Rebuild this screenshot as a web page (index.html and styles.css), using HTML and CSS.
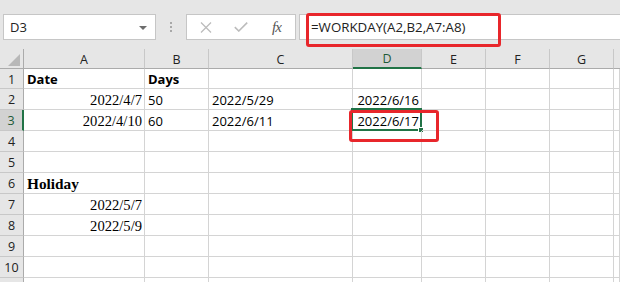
FILE: index.html
```html
<!DOCTYPE html>
<html>
<head>
<meta charset="utf-8">
<link rel="stylesheet" href="styles.css">
</head>
<body>
<div class="app">
  <div class="toolbar">
    <div class="namebox">
      <span class="name">D3</span>
      <svg class="dd" width="8" height="4" viewBox="0 0 8 4"><path d="M0 0H8L4 4Z" fill="#6d6d6d"/></svg>
    </div>
    <div class="grip"><i></i><i></i><i></i></div>
    <div class="fxbtns">
      <svg class="ico" width="12" height="11" viewBox="0 0 12 11"><path d="M1 0.5L11 10.5M11 0.5L1 10.5" stroke="#bcbcbc" stroke-width="1.3" fill="none"/></svg>
      <svg class="ico" width="14" height="10" viewBox="0 0 14 10"><path d="M0.8 5.2L4.8 9L13.2 0.6" stroke="#bcbcbc" stroke-width="1.6" fill="none"/></svg>
      <span class="fx">fx</span>
    </div>
    <div class="formula"><span>=WORKDAY(A2,B2,A7:A8)</span></div>
  </div>
  <div class="annot annot-formula"></div>

  <div class="sheet">
    <div class="h corner"><svg width="12" height="12" viewBox="0 0 12 12"><path d="M12 0V12H0Z" fill="#b8b8b8"/></svg></div>
    <div class="h col">A</div>
    <div class="h col">B</div>
    <div class="h col">C</div>
    <div class="h col sel-col">D</div>
    <div class="h col">E</div>
    <div class="h col">F</div>
    <div class="h col">G</div>
    <div class="h col last"></div>

    <div class="h row">1</div>
    <div class="c b">Date</div><div class="c b">Days</div><div class="c"></div><div class="c"></div><div class="c"></div><div class="c"></div><div class="c"></div><div class="c"></div>

    <div class="h row">2</div>
    <div class="c r serif">2022/4/7</div><div class="c">50</div><div class="c">2022/5/29</div><div class="c r">2022/6/16</div><div class="c"></div><div class="c"></div><div class="c"></div><div class="c"></div>

    <div class="h row sel-row">3</div>
    <div class="c r serif">2022/4/10</div><div class="c">60</div><div class="c">2022/6/11</div><div class="c r active">2022/6/17<span class="selbox"></span><span class="handle"></span></div><div class="c"></div><div class="c"></div><div class="c"></div><div class="c"></div>

    <div class="h row">4</div>
    <div class="c"></div><div class="c"></div><div class="c"></div><div class="c"></div><div class="c"></div><div class="c"></div><div class="c"></div><div class="c"></div>

    <div class="h row">5</div>
    <div class="c"></div><div class="c"></div><div class="c"></div><div class="c"></div><div class="c"></div><div class="c"></div><div class="c"></div><div class="c"></div>

    <div class="h row">6</div>
    <div class="c serif b holiday">Holiday</div><div class="c"></div><div class="c"></div><div class="c"></div><div class="c"></div><div class="c"></div><div class="c"></div><div class="c"></div>

    <div class="h row">7</div>
    <div class="c r serif">2022/5/7</div><div class="c"></div><div class="c"></div><div class="c"></div><div class="c"></div><div class="c"></div><div class="c"></div><div class="c"></div>

    <div class="h row">8</div>
    <div class="c r serif">2022/5/9</div><div class="c"></div><div class="c"></div><div class="c"></div><div class="c"></div><div class="c"></div><div class="c"></div><div class="c"></div>

    <div class="h row">9</div>
    <div class="c"></div><div class="c"></div><div class="c"></div><div class="c"></div><div class="c"></div><div class="c"></div><div class="c"></div><div class="c"></div>

    <div class="h row">10</div>
    <div class="c"></div><div class="c"></div><div class="c"></div><div class="c"></div><div class="c"></div><div class="c"></div><div class="c"></div><div class="c"></div>

    <div class="h row"></div>
    <div class="c"></div><div class="c"></div><div class="c"></div><div class="c"></div><div class="c"></div><div class="c"></div><div class="c"></div><div class="c"></div>
  </div>
  <div class="annot annot-cell"></div>
</div>
</body>
</html>
```

FILE: styles.css
```css
* { box-sizing: border-box; }
html, body { margin: 0; padding: 0; }
body {
  width: 620px;
  height: 282px;
  overflow: hidden;
  background: #ffffff;
  font-family: "Open Sans", "Noto Sans", sans-serif;
  color: #000;
}
.app { position: relative; width: 620px; height: 282px; overflow: hidden; }

.toolbar {
  height: 49px;
  background: #e6e6e6;
  display: flex;
  align-items: flex-start;
  padding-top: 14px;
}
.namebox {
  margin-left: 3px;
  width: 153px;
  height: 26px;
  background: #fff;
  border: 1px solid #c6c6c6;
  display: flex;
  align-items: center;
  justify-content: space-between;
  padding: 0 8px 0 6px;
}
.name { font-size: 13px; color: #222; }
.dd { display: block; margin-top: 1px; }
.grip {
  width: 30px;
  height: 26px;
  display: flex;
  flex-direction: column;
  align-items: center;
  justify-content: center;
  gap: 2px;
}
.grip i { display: block; width: 2px; height: 2px; background: #a8a8a8; }
.fxbtns {
  width: 110px;
  height: 26px;
  background: #fff;
  border: 1px solid #c6c6c6;
  display: flex;
  align-items: center;
  padding-left: 13px;
}
.fxbtns .ico { display: block; }
.fxbtns .ico + .ico { margin-left: 22px; }
.fx {
  margin-left: 24px;
  font-family: "Liberation Serif", serif;
  font-style: italic;
  font-size: 15px;
  color: #555;
  letter-spacing: -1px;
  line-height: 1;
}
.formula {
  margin-left: 3px;
  flex: 1;
  height: 26px;
  background: #fff;
  border: 1px solid #c6c6c6;
  border-right: none;
  display: flex;
  align-items: center;
  padding-left: 11px;
  font-size: 13.3px;
  color: #222;
}

.annot {
  position: absolute;
  border: 3px solid #e8262b;
  border-radius: 3px;
}
.annot-formula { left: 306px; top: 13px; width: 195px; height: 34px; }
.annot-cell { left: 349px; top: 110px; width: 90px; height: 32px; }

.sheet {
  display: grid;
  grid-template-columns: 24px 121px 64px 144px 69px 64px 64px 64px 6px;
  grid-template-rows: 20px 20px;
  grid-auto-rows: 21px;
}
.h {
  background: #e6e6e6;
  border-right: 1px solid #c8c8c8;
  border-bottom: 1px solid #c8c8c8;
  font-size: 12.5px;
  color: #222;
  display: flex;
  align-items: center;
  justify-content: center;
}
.corner { border-right: 1px solid #ababab; border-bottom: 1px solid #ababab; align-items: flex-end; justify-content: flex-end; padding: 0 3px 2px 0; }
.corner svg { display: block; }
.col { border-bottom: 1px solid #ababab; padding-top: 1px; }
.col.last { border-right: none; }
.row { border-right: 1px solid #ababab; padding-top: 1px; }
.sel-col { background: #d2d2d2; border-bottom: 2px solid #217346; color: #1d5a37; }
.sel-row { background: #d2d2d2; border-right: 2px solid #217346; color: #1d5a37; }

.c {
  position: relative;
  border-right: 1px solid #d4d4d4;
  border-bottom: 1px solid #d4d4d4;
  font-size: 13px;
  line-height: 16px;
  display: flex;
  align-items: flex-end;
  padding: 0 2px 1px 3px;
  white-space: nowrap;
}
.c.r { justify-content: flex-end; }
.c.b { font-weight: 700; }
.serif { font-family: "Liberation Serif", "Times New Roman", serif; font-size: 14.6px; padding-bottom: 1px; }
.holiday { font-size: 15.3px; }

.selbox {
  position: absolute;
  left: -2px;
  top: -2px;
  right: -1px;
  bottom: -1px;
  border: 2px solid #217346;
}
.handle {
  position: absolute;
  right: -3px;
  bottom: -3px;
  width: 6px;
  height: 6px;
  background: #217346;
  border: 1px solid #fff;
}
```
